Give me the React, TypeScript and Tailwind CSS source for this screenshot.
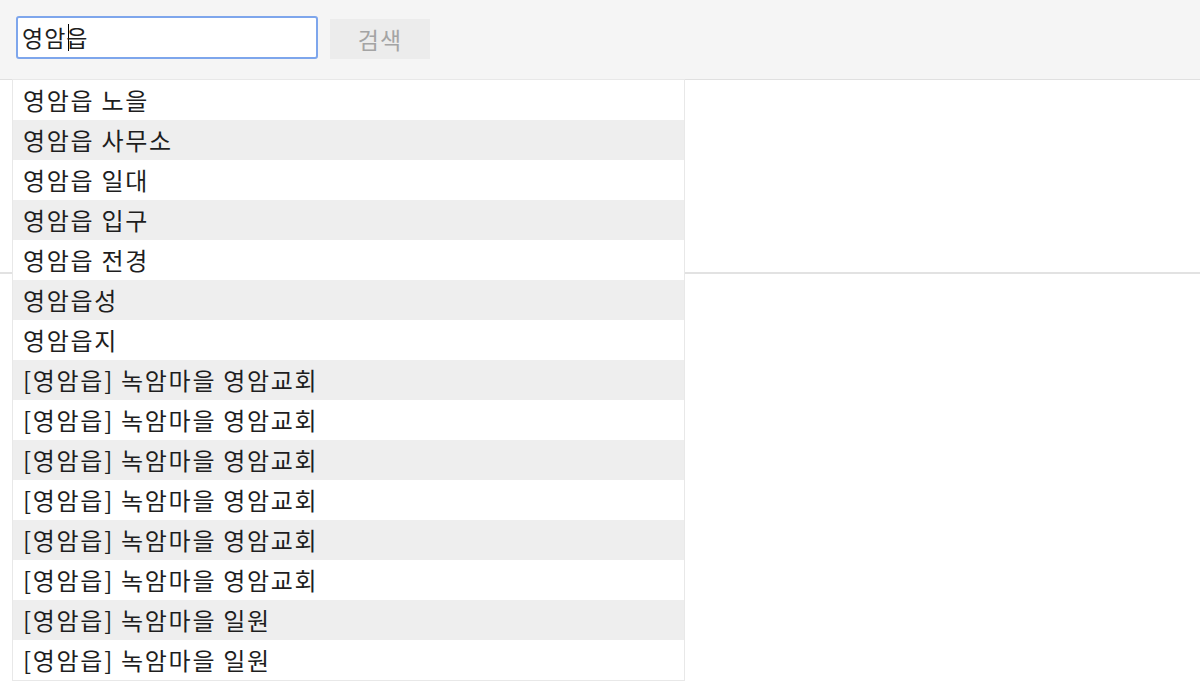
import React from 'react';

const items = [
  '영암읍 노을',
  '영암읍 사무소',
  '영암읍 일대',
  '영암읍 입구',
  '영암읍 전경',
  '영암읍성',
  '영암읍지',
  '[영암읍] 녹암마을 영암교회',
  '[영암읍] 녹암마을 영암교회',
  '[영암읍] 녹암마을 영암교회',
  '[영암읍] 녹암마을 영암교회',
  '[영암읍] 녹암마을 영암교회',
  '[영암읍] 녹암마을 영암교회',
  '[영암읍] 녹암마을 일원',
  '[영암읍] 녹암마을 일원',
];

export default function App() {
  return (
    <div className="w-[1200px] h-[700px] bg-white overflow-hidden relative font-['Noto_Sans_CJK_KR',sans-serif] text-[#1e1e1e]">
      {/* Search bar */}
      <header className="h-[80px] bg-[#f5f5f5] border-b border-[#e0e0e0] flex items-start gap-[12px] pl-[16px] pt-[16px]">
        <div className="w-[302px] h-[43px] bg-white border-2 border-[#7ea6ec] rounded-[3px] flex items-center pl-[4px] text-[23px] tracking-[1px] leading-none">
          영암<span className="w-px h-[27px] bg-black ml-[2px] -mr-[3px]"></span>읍
        </div>
        <button className="mt-[3px] w-[100px] h-[40px] bg-[#ececec] text-[#a4a4a4] text-[23px] tracking-[1px] leading-none">검색</button>
      </header>

      {/* Content area */}
      <div className="h-[194px] border-b-2 border-[#e2e2e2]"></div>

      {/* Autocomplete dropdown */}
      <ul className="absolute left-[12px] top-[79px] w-[673px] border border-[#e8e8e8] bg-white">
        {items.map((item, i) => (
          <li
            key={i}
            className={`h-[40px] flex items-center pl-[10px] text-[24px] tracking-[1.7px] leading-none whitespace-nowrap ${i % 2 === 1 ? 'bg-[#eeeeee]' : 'bg-white'}`}
          >
            {item}
          </li>
        ))}
      </ul>
    </div>
  );
}
